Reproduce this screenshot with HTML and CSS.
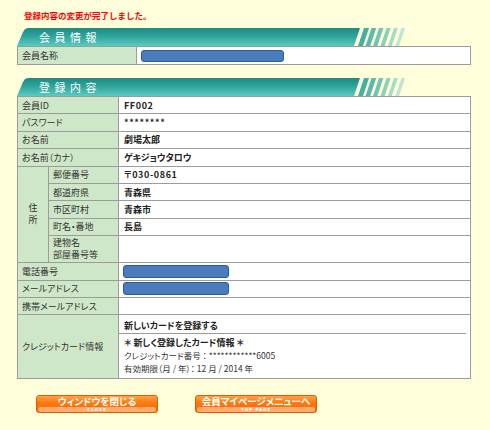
FILE: index.html
```html
<!DOCTYPE html>
<html lang="ja">
<head>
<meta charset="utf-8">
<title>登録内容</title>
<link rel="stylesheet" href="styles.css">
</head>
<body>
<div class="page">
  <p class="msg">登録内容の変更が完了しました。</p>

  <div class="head">
    <div class="bar">会員情報</div>
    <svg class="stripes" width="50" height="18" viewBox="0 0 50 18">
      <polygon points="1,18 6,18 12,0 7,0" fill="#47aea2"/>
      <polygon points="8.5,18 13.2,18 19.2,0 14.5,0" fill="#5db9ac"/>
      <polygon points="16,18 20.4,18 26.4,0 22,0" fill="#74c4b5"/>
      <polygon points="23.5,18 27.6,18 33.6,0 29.5,0" fill="#8dcfbf"/>
      <polygon points="31,18 34.8,18 40.8,0 37,0" fill="#a6dac9"/>
      <polygon points="38.5,18 42,18 48,0 44.5,0" fill="#bfe5d3"/>
    </svg>
  </div>
  <table class="t1">
    <tr>
      <th>会員名称</th>
      <td><span class="redact r-name"></span></td>
    </tr>
  </table>

  <div class="head head2">
    <div class="bar">登録内容</div>
    <svg class="stripes" width="50" height="18" viewBox="0 0 50 18">
      <polygon points="1,18 6,18 12,0 7,0" fill="#47aea2"/>
      <polygon points="8.5,18 13.2,18 19.2,0 14.5,0" fill="#5db9ac"/>
      <polygon points="16,18 20.4,18 26.4,0 22,0" fill="#74c4b5"/>
      <polygon points="23.5,18 27.6,18 33.6,0 29.5,0" fill="#8dcfbf"/>
      <polygon points="31,18 34.8,18 40.8,0 37,0" fill="#a6dac9"/>
      <polygon points="38.5,18 42,18 48,0 44.5,0" fill="#bfe5d3"/>
    </svg>
  </div>
  <table class="t2">
    <colgroup>
      <col class="c1"><col class="c2"><col>
    </colgroup>
    <tr><th colspan="2">会員ID</th><td class="v mono">FF002</td></tr>
    <tr><th colspan="2">パスワード</th><td class="v mono">********</td></tr>
    <tr><th colspan="2">お名前</th><td class="v">劇場太郎</td></tr>
    <tr><th colspan="2">お名前（カナ）</th><td class="v">ゲキジョウタロウ</td></tr>
    <tr><th rowspan="5" class="addr">住<br>所</th><th>郵便番号</th><td class="v mono">〒030-0861</td></tr>
    <tr><th>都道府県</th><td class="v">青森県</td></tr>
    <tr><th>市区町村</th><td class="v">青森市</td></tr>
    <tr><th>町名・番地</th><td class="v">長島</td></tr>
    <tr class="tall"><th>建物名<br>部屋番号等</th><td class="v"></td></tr>
    <tr><th colspan="2">電話番号</th><td><span class="redact r-small"></span></td></tr>
    <tr><th colspan="2">メールアドレス</th><td><span class="redact r-small"></span></td></tr>
    <tr><th colspan="2">携帯メールアドレス</th><td></td></tr>
    <tr class="cc">
      <th colspan="2">クレジットカード情報</th>
      <td class="cc-cell">
        <div class="cc-new">新しいカードを登録する</div>
        <div class="cc-line"></div>
        <div class="cc-title">＊ 新しく登録したカード情報 ＊</div>
        <div class="cc-row">クレジットカード番号 ： ************6005</div>
        <div class="cc-row">有効期限（月 / 年）： 12 月 / 2014 年</div>
      </td>
    </tr>
  </table>

  <div class="buttons">
    <div class="btn">
      <span class="btn-main">ウィンドウを閉じる</span>
      <span class="btn-sub">CLOSE</span>
    </div>
    <div class="btn">
      <span class="btn-main">会員マイページメニューへ</span>
      <span class="btn-sub">TOP PAGE</span>
    </div>
  </div>
</div>
</body>
</html>
```
FILE: styles.css
```css
html, body {
  margin: 0;
  padding: 0;
  background: #ffffdc;
}
body {
  font-family: "Noto Sans CJK JP", "Noto Sans", sans-serif;
  font-size: 9px;
  color: #333;
  font-feature-settings: "palt";
}
.page {
  padding-left: 17px;
  width: 454px;
}
.msg {
  margin: 0 0 7px 0;
  padding: 9px 0 0 7px;
  line-height: 12px;
  font-size: 8.5px;
  font-weight: bold;
  color: #ff0000;
  font-feature-settings: normal;
}
.head {
  display: flex;
  height: 18px;
}
.head2 {
  margin-top: 13px;
}
.bar {
  width: 343px;
  height: 18px;
  background: linear-gradient(to bottom, #1c8a80 0%, #2fa39a 45%, #5ccac0 100%);
  clip-path: polygon(0 100%, 6px 4px, 8px 1px, 11px 0, 100% 0, calc(100% - 6px) 100%);
  color: #fff;
  font-size: 11px;
  letter-spacing: 4.5px;
  line-height: 18px;
  padding-left: 22px;
  box-sizing: border-box;
  font-feature-settings: normal;
}
.stripes {
  display: block;
  margin-left: -3px;
}
table {
  border-collapse: collapse;
  width: 454px;
  table-layout: fixed;
  background: #fff;
}
th, td {
  border: 1px solid #9c9c9c;
  padding: 0 4px;
  text-align: left;
  font-weight: normal;
  vertical-align: middle;
}
th {
  background: #cfe7c9;
  color: #333;
}
.t1 th {
  width: 110px;
  height: 17px;
}
.t1 td {
  padding-left: 4px;
}
.t2 .c1 { width: 31px; }
.t2 .c2 { width: 70px; }
.t2 th, .t2 td {
  height: 16.4px;
  line-height: 11px;
}
.t2 td {
  padding-left: 5px;
}
.v {
  font-weight: bold;
  color: #222;
}
.mono {
  letter-spacing: 0.6px;
}
.t2 .addr {
  text-align: center;
  padding: 0;
  line-height: 12px;
}
.t2 .tall th, .t2 .tall td {
  height: 26px;
  line-height: 12px;
}
.redact {
  display: block;
  box-sizing: border-box;
  background: #4a7bbb;
  border: 1px solid #2d5b98;
  border-radius: 3px;
}
.r-name {
  width: 143px;
  height: 12px;
}
.t2 td .r-small {
  width: 106px;
  height: 13px;
  margin-left: -1px;
}
.t2 .cc th {
  height: 58px;
}
.t2 .cc-cell {
  padding: 3px 4px 2px 5px;
  height: 58px;
}
.cc-new {
  font-weight: bold;
  line-height: 13px;
  color: #222;
}
.cc-line {
  border-top: 1px solid #9c9c9c;
  margin: 1px 0 3px -5px;
}
.cc-title {
  font-weight: bold;
  line-height: 12px;
  color: #222;
}
.cc-row {
  line-height: 13px;
  font-size: 8.5px;
}
.buttons {
  display: flex;
  gap: 37px;
  padding: 16px 0 0 19px;
}
.btn {
  width: 122px;
  height: 18px;
  box-sizing: border-box;
  border-radius: 3px;
  border: 1px solid #e45c00;
  background: linear-gradient(to bottom, #ffa24a 0%, #ff7a10 40%, #f26400 100%);
  display: flex;
  flex-direction: column;
  align-items: stretch;
}
.btn-main {
  height: 10px;
  line-height: 11px;
  text-align: center;
  color: #fff;
  font-weight: bold;
  font-size: 9.5px;
  font-feature-settings: "palt";
}
.btn-sub {
  height: 5px;
  margin: 0.5px 1px 0 1px;
  border-radius: 3px;
  background: #ffab6e;
  color: #fff;
  font-family: "DejaVu Sans", sans-serif;
  font-size: 4px;
  line-height: 5px;
  letter-spacing: 1px;
  text-align: center;
  font-weight: bold;
}
```
